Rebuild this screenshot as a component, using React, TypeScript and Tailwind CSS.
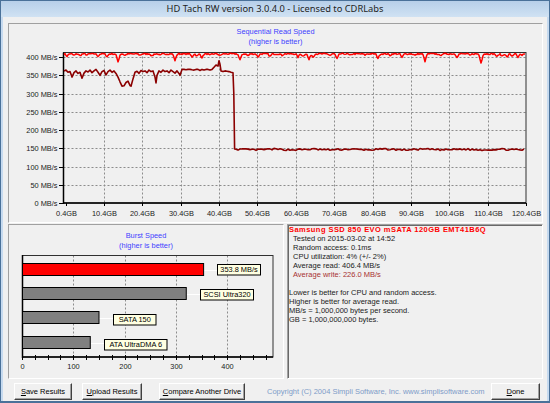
import React from "react";

function makeRng(seed: number) {
  let s = seed;
  return () => {
    s = (s * 16807) % 2147483647;
    return (s - 1) / 2147483646;
  };
}

const vy = (v: number) => 203 - v * 0.365;
const gx = (gb: number) => 526 - (120.4 - gb) * 3.837;
const TX = (ax: number) => ax - 9;
const TY = (ay: number) => ay - 50;

const redDips: [number, number][] = [
  [67, 6], [74, 4], [80, 5], [87, 3], [98, 6], [107, 7], [118, 22], [125, 4], [140, 3], [152, 6],
  [160, 4], [175, 18], [192, 8], [197, 6], [202, 10], [210, 4], [220, 5], [240, 17], [248, 5],
  [258, 8], [270, 7], [282, 4], [298, 9], [303, 6], [309, 16], [313, 8], [330, 4], [337, 14],
  [350, 4], [365, 3], [378, 12], [390, 4], [402, 10], [415, 4], [425, 20], [440, 5], [457, 8],
  [470, 4], [481, 24], [497, 8], [502, 6], [507, 9], [512, 6], [518, 10], [522, 5],
];

function buildRed(): string {
  const r = makeRng(7);
  const pts: string[] = [];
  for (let ax = 64; ax <= 525.5; ax += 1) {
    let v = 408.5 + (r() - 0.5) * 3.5;
    for (const [dx, d] of redDips) {
      const t = (ax - dx) / 1.4;
      v -= d * Math.exp(-t * t);
    }
    pts.push(`${TX(ax).toFixed(1)},${TY(vy(v)).toFixed(1)}`);
  }
  return pts.join(" ");
}

const darkKeys: [number, number][] = [
  [64, 362], [66, 364], [68, 358], [70, 360], [72, 345], [74, 357], [76, 362], [78, 355], [80, 358],
  [82, 342], [84, 356], [86, 362], [88, 359], [90, 364], [92, 357], [94, 362], [96, 366], [98, 358],
  [100, 350], [102, 360], [104, 363], [106, 351], [108, 360], [110, 364], [112, 358], [114, 362],
  [116, 355], [118, 345], [120, 332], [122, 320], [124, 321], [126, 330], [128, 334], [130, 322],
  [131, 320], [133, 340], [135, 358], [137, 361], [139, 355], [141, 363], [143, 360], [145, 362],
  [147, 357], [149, 364], [151, 360], [153, 362], [155, 345], [156, 329], [157, 350], [159, 362],
  [161, 358], [163, 364], [165, 360], [167, 362], [169, 357], [171, 364], [173, 360], [175, 356],
  [177, 362], [179, 355], [180, 350], [182, 366], [184, 366], [186, 365], [188, 366], [190, 366],
  [192, 365], [194, 364], [196, 366], [198, 366], [200, 363], [202, 366], [204, 364], [206, 366],
  [208, 366], [210, 364], [212, 366], [214, 372], [216, 378], [218, 375], [219, 390], [220, 380],
  [221, 362], [223, 360], [225, 362], [227, 361], [229, 360], [231, 358], [233, 357], [233.8, 300],
  [234.6, 148], [236, 147],
];

function buildDark(): string {
  const r = makeRng(13);
  const pts: string[] = darkKeys.map(([x, v]) => `${TX(x).toFixed(1)},${TY(vy(v)).toFixed(1)}`);
  for (let ax = 238; ax <= 525.5; ax += 2) {
    const v = 146.5 + (r() - 0.5) * 4.5 + Math.sin(ax / 6) * 0.8;
    pts.push(`${TX(ax).toFixed(1)},${TY(vy(v)).toFixed(1)}`);
  }
  return pts.join(" ");
}

const RED = buildRed();
const DARK = buildDark();

const FONT = "'Liberation Sans', Arial, sans-serif";

function SeqChart() {
  const yVals = [0, 50, 100, 150, 200, 250, 300, 350, 400];
  const xGbs = Array.from({ length: 13 }, (_, i) => 0.4 + i * 10);
  const left = TX(63.5);
  const right = TX(526);
  const top = TY(52.5);
  const bottom = TY(203);
  return (
    <svg width={533} height={172} className="block" fontFamily={FONT}>
      {yVals.slice(1).map((v) => {
        const y = Math.round(TY(vy(v))) + 0.5;
        return <line key={"h" + v} x1={left} x2={right} y1={y} y2={y} stroke="#8c8c8c" strokeDasharray="2 2" />;
      })}
      {xGbs.slice(1, 12).map((g) => {
        const x = Math.round(TX(gx(g))) + 0.5;
        return <line key={"v" + g} x1={x} x2={x} y1={top} y2={bottom} stroke="#8c8c8c" strokeDasharray="2 2" />;
      })}
      <rect x={left} y={top} width={right - left} height={bottom - top} fill="none" stroke="#303030" />
      <line x1={left} x2={left} y1={top} y2={bottom + 1} stroke="#000" strokeWidth={1.5} />
      <line x1={left} x2={right} y1={bottom} y2={bottom} stroke="#000" strokeWidth={1.5} />
      {yVals.map((v) => {
        const y = Math.round(TY(vy(v))) + 0.5;
        return (
          <g key={"yl" + v}>
            <line x1={50} x2={left} y1={y} y2={y} stroke="#000" />
            <text x={48.5} y={y + 2.6} fontSize={7.4} textAnchor="end" fill="#1a1a1a">
              {v} MB/s
            </text>
          </g>
        );
      })}
      {xGbs.map((g) => {
        const x = Math.round(TX(gx(g))) + 0.5;
        return (
          <g key={"xl" + g}>
            <line x1={x} x2={x} y1={bottom} y2={bottom + 3} stroke="#000" />
            <text x={x} y={165.6} fontSize={7.4} textAnchor="middle" fill="#1a1a1a">
              {g.toFixed(1)}GB
            </text>
          </g>
        );
      })}
      <polyline points={RED} fill="none" stroke="#ff0000" strokeWidth={1.5} strokeLinejoin="round" />
      <polyline points={DARK} fill="none" stroke="#8b0000" strokeWidth={1.6} strokeLinejoin="round" />
    </svg>
  );
}

const BX = (v: number) => 13 + v * 0.5133;

function BurstChart() {
  const bars = [
    { v: 353.8, y: 9, fill: "#ff0000", label: "353.8 MB/s", bx: 208.5, bw: 43, by: 10 },
    { v: 320, y: 33, fill: "#808080", label: "SCSI Ultra320", bx: 191.5, bw: 53, by: 35 },
    { v: 150, y: 57, fill: "#808080", label: "SATA 150", bx: 104.5, bw: 42.5, by: 60 },
    { v: 133, y: 82, fill: "#808080", label: "ATA UltraDMA 6", bx: 95.5, bw: 62.5, by: 85 },
  ];
  const ticks = Array.from({ length: 20 }, (_, i) => i * 25);
  return (
    <svg width={274} height={124} className="block" fontFamily={FONT}>
      {[100, 200, 300, 400].map((v) => {
        const x = Math.round(BX(v)) + 0.5;
        return <line key={"g" + v} x1={x} x2={x} y1={1.5} y2={103} stroke="#8c8c8c" strokeDasharray="2 2" />;
      })}
      <rect x={13.5} y={1.5} width={250.5} height={101.5} fill="none" stroke="#303030" />
      <line x1={13.5} x2={13.5} y1={1} y2={104} stroke="#000" strokeWidth={1.5} />
      <line x1={13} x2={264} y1={103} y2={103} stroke="#000" strokeWidth={1.5} />
      {ticks.map((v) => {
        const x = Math.round(BX(v)) + 0.5;
        return <line key={"t" + v} x1={x} x2={x} y1={101} y2={106} stroke="#000" />;
      })}
      {[0, 100, 200, 300, 400].map((v) => (
        <text key={"l" + v} x={Math.round(BX(v)) + 0.5} y={115.3} fontSize={7.4} textAnchor="middle" fill="#1a1a1a">
          {v}
        </text>
      ))}
      {bars.map((b) => {
        const end = BX(b.v);
        const cy = b.y + 6.5;
        return (
          <g key={b.label}>
            <line x1={end} x2={b.bx} y1={Math.round(cy) + 0.5} y2={Math.round(cy) + 0.5} stroke="#ffffff" />
            <rect x={13.5} y={b.y + 0.5} width={end - 13.5} height={12} fill={b.fill} stroke="#000" />
            <rect x={b.bx} y={b.by + 0.5} width={b.bw} height={10.5} fill="#ffffe1" stroke="#000" />
            <text x={b.bx + b.bw / 2} y={b.by + 8.4} fontSize={7.4} textAnchor="middle" fill="#000">
              {b.label}
            </text>
          </g>
        );
      })}
    </svg>
  );
}

function Btn({ first, rest, w }: { first: string; rest: string; w: string }) {
  return (
    <div
      className={`${w} h-[17px] flex items-center justify-center bg-[#f0f0f0] border border-t-white border-l-white border-r-[#404040] border-b-[#404040] shadow-[inset_-1px_-1px_0_#a0a0a0] text-[7.5px] text-black leading-none`}
    >
      <span>
        <span className="underline">{first}</span>
        {rest}
      </span>
    </div>
  );
}

export default function App() {
  return (
    <div
      className="w-[550px] h-[403px] border border-b-2 border-[#4a7199] bg-[#c6daef] flex flex-col overflow-hidden"
      style={{ fontFamily: FONT }}
    >
      <div className="h-[16px] shrink-0 bg-gradient-to-b from-[#b7cfe9] to-[#d0e2f3] flex items-center justify-center">
        <span className="text-[9.3px] text-[#1e1e1e] leading-none" style={{ fontFamily: "'Noto Sans', 'Open Sans', sans-serif" }}>
          HD Tach RW version 3.0.4.0 - Licensed to CDRLabs
        </span>
      </div>
      <div className="flex-1 mx-[2px] bg-[#f0f0f0] flex flex-col pl-[5px] pr-[4px] pt-[6px]">
        <div className="h-[200px] shrink-0 border border-t-[#a0a0a0] border-l-[#a0a0a0] border-r-white border-b-white flex flex-col">
          <div className="h-[26px] shrink-0 pt-[3px] flex flex-col items-center text-[7.4px] leading-[10px] text-[#4040ff]">
            <div>Sequential Read Speed</div>
            <div>(higher is better)</div>
          </div>
          <SeqChart />
        </div>
        <div className="h-[155px] shrink-0 mt-[1px] flex gap-[3px]">
          <div className="w-[276px] shrink-0 border border-t-[#a0a0a0] border-l-[#a0a0a0] border-r-white border-b-white flex flex-col">
            <div className="h-[29px] shrink-0 pt-[6px] flex flex-col items-center text-[7.4px] leading-[10px] text-[#4040ff]">
              <div>Burst Speed</div>
              <div>(higher is better)</div>
            </div>
            <BurstChart />
          </div>
          <div className="flex-1 border border-t-[#a0a0a0] border-l-[#a0a0a0] border-r-white border-b-white shadow-[inset_1px_1px_0_#696969] pl-[1px] text-[7.5px] leading-[9px] text-[#222]">
            <div className="font-bold text-[#ff0000] tracking-[0.45px] whitespace-nowrap">
              Samsung SSD 850 EVO mSATA 120GB EMT41B6Q
            </div>
            <div className="pl-[4px]">
              <div>Tested on 2015-03-02 at 14:52</div>
              <div>Random access: 0.1ms</div>
              <div>CPU utilization: 4% (+/- 2%)</div>
              <div>Average read: 406.4 MB/s</div>
              <div className="text-[#a83232]">Average write: 226.0 MB/s</div>
            </div>
            <div className="h-[9px]" />
            <div>Lower is better for CPU and random access.</div>
            <div>Higher is better for average read.</div>
            <div>MB/s = 1,000,000 bytes per second.</div>
            <div>GB = 1,000,000,000 bytes.</div>
          </div>
        </div>
        <div className="h-[17px] shrink-0 mt-[4px] flex items-center pl-[6px] pr-[3px]">
          <Btn first="S" rest="ave Results" w="w-[58px]" />
          <div className="w-[10px]" />
          <Btn first="U" rest="pload Results" w="w-[60px]" />
          <div className="w-[17px]" />
          <Btn first="C" rest="ompare Another Drive" w="w-[86px]" />
          <div className="ml-[22px] text-[7.5px] text-[#7e9cc8] whitespace-nowrap">
            Copyright (C) 2004 Simpli Software, Inc. www.simplisoftware.com
          </div>
          <div className="flex-1" />
          <Btn first="D" rest="one" w="w-[49px]" />
        </div>
      </div>
    </div>
  );
}
